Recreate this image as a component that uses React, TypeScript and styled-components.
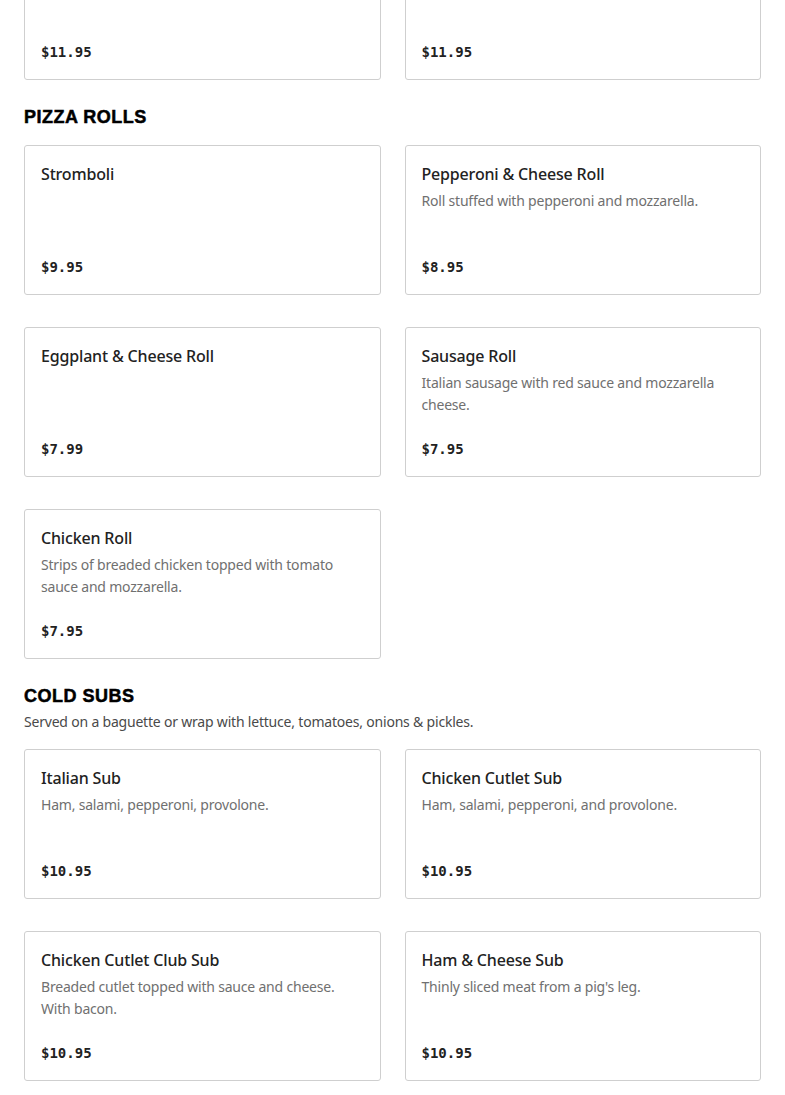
import styled, { createGlobalStyle } from 'styled-components'

interface IItem {
  name?: string
  description?: string
  price: string
}

interface ISection {
  title?: string
  note?: string
  items: IItem[]
}

const sections: ISection[] = [
  {
    items: [{ price: '$11.95' }, { price: '$11.95' }]
  },
  {
    title: 'Pizza Rolls',
    items: [
      { name: 'Stromboli', price: '$9.95' },
      {
        name: 'Pepperoni & Cheese Roll',
        description: 'Roll stuffed with pepperoni and mozzarella.',
        price: '$8.95'
      },
      { name: 'Eggplant & Cheese Roll', price: '$7.99' },
      {
        name: 'Sausage Roll',
        description: 'Italian sausage with red sauce and mozzarella cheese.',
        price: '$7.95'
      },
      {
        name: 'Chicken Roll',
        description: 'Strips of breaded chicken topped with tomato sauce and mozzarella.',
        price: '$7.95'
      }
    ]
  },
  {
    title: 'Cold Subs',
    note: 'Served on a baguette or wrap with lettuce, tomatoes, onions & pickles.',
    items: [
      { name: 'Italian Sub', description: 'Ham, salami, pepperoni, provolone.', price: '$10.95' },
      {
        name: 'Chicken Cutlet Sub',
        description: 'Ham, salami, pepperoni, and provolone.',
        price: '$10.95'
      },
      {
        name: 'Chicken Cutlet Club Sub',
        description: 'Breaded cutlet topped with sauce and cheese. With bacon.',
        price: '$10.95'
      },
      {
        name: 'Ham & Cheese Sub',
        description: "Thinly sliced meat from a pig's leg.",
        price: '$10.95'
      }
    ]
  }
]

function App() {
  return (
    <>
      <GlobalStyle />
      <Page>
        {sections.map((section, index) => (
          <Section key={index}>
            {section.title && <Heading $hasNote={!!section.note}>{section.title}</Heading>}
            {section.note && <Note>{section.note}</Note>}
            <Grid>
              {section.items.map((item, i) => (
                <Card key={i}>
                  <div>
                    {item.name && <Name>{item.name}</Name>}
                    {item.description && <Description>{item.description}</Description>}
                  </div>
                  <Price>{item.price}</Price>
                </Card>
              ))}
            </Grid>
          </Section>
        ))}
      </Page>
    </>
  )
}

export default App

const GlobalStyle = createGlobalStyle`
  body {
    margin: 0;
    background: #fff;
    font-family: 'Noto Sans', 'Liberation Sans', sans-serif;
    color: #222;
  }
`

const Page = styled.main`
  margin-top: -70px;
  padding: 0 24px 40px;
`

const Section = styled.section`
  & + & {
    margin-top: 25px;
  }
`

const Heading = styled.h2<{ $hasNote: boolean }>`
  margin: 0 0 ${p => (p.$hasNote ? '3px' : '16px')};
  font-family: 'Liberation Sans', Arial, sans-serif;
  font-weight: 900;
  font-size: 18px;
  line-height: 24px;
  letter-spacing: 0.5px;
  text-transform: uppercase;
  color: #000;
  -webkit-text-stroke: 0.5px #000;
`

const Note = styled.p`
  margin: 0 0 16px;
  font-size: 14px;
  line-height: 22px;
  letter-spacing: -0.2px;
  color: #4a4a4a;
`

const Grid = styled.div`
  display: grid;
  grid-template-columns: 1fr 1fr;
  column-gap: 24px;
  row-gap: 32px;
`

const Card = styled.article`
  box-sizing: border-box;
  height: 150px;
  padding: 15px 16px 14px;
  border: 1px solid #cfcfcf;
  border-radius: 3px;
  display: flex;
  flex-direction: column;
  justify-content: space-between;
`

const Name = styled.h3`
  margin: 0;
  font-size: 16px;
  font-weight: 500;
  line-height: 26px;
  letter-spacing: -0.17px;
  color: #222;
`

const Description = styled.p`
  margin: 3px 0 0;
  font-size: 14px;
  line-height: 22px;
  letter-spacing: -0.2px;
  color: #707070;
`

const Price = styled.p`
  margin: 0;
  font-family: 'DejaVu Sans Mono', 'Liberation Mono', monospace;
  font-weight: 700;
  font-size: 14px;
  line-height: 26px;
  color: #222;
`
